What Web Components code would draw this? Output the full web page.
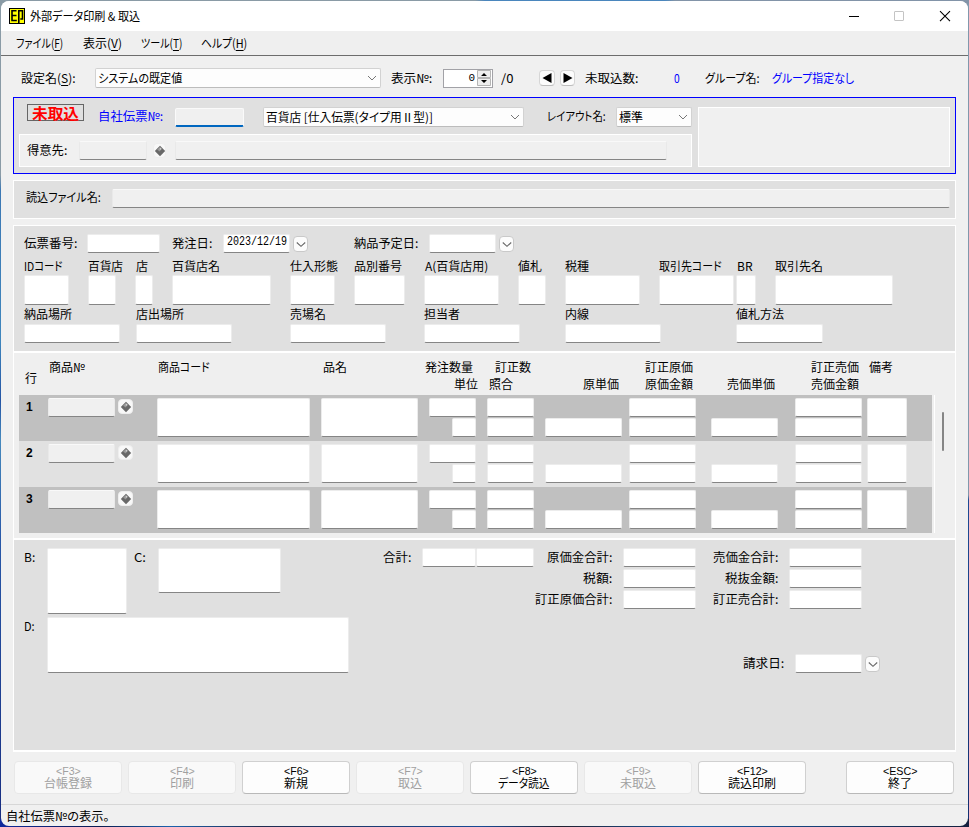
<!DOCTYPE html>
<html lang="ja">
<head>
<meta charset="utf-8">
<title>外部データ印刷 & 取込</title>
<style>
html,body{margin:0;padding:0}
body{width:969px;height:827px;overflow:hidden;font:12px/12px "Noto Sans CJK JP","Liberation Sans",sans-serif;color:#000;
background:linear-gradient(90deg,#8a9ba6 0 475px,#4a86bd 485px 665px,#8294a8 675px) 0 0/100% 4px no-repeat,
linear-gradient(90deg,#10299c,#0a1c50 100px,#1b62ad 170px,#202c50 260px,#184a95 480px,#202030 560px,#175aa5 690px,#15203e) 0 100%/100% 8px no-repeat,
linear-gradient(#8a9ba6 0 175px,#3c78b4 190px,#3f86bd 340px,#2454a4 400px,#4689bd 440px,#2858a8 540px,#172c80) 0 0/50% 100% no-repeat,
linear-gradient(#8198ac 0 495px,#1d4b94 500px,#132f70) 100% 0/50% 100% no-repeat}
</style>
</head>
<body>
<app-window>
  <title-bar><ui-label fit="110">外部データ印刷 &amp; 取込</ui-label></title-bar>
  <menu-bar>
    <form-row x0="1" h="24" cols="16:47 83:39 141:41 201:46">
      <ui-label fit="47">ファイル(<u>F</u>)</ui-label><ui-label fit="39">表示(<u>V</u>)</ui-label><ui-label fit="41">ツール(<u>T</u>)</ui-label><ui-label fit="46">ヘルプ(<u>H</u>)</ui-label>
    </form-row>
  </menu-bar>
  <form-row x0="1" h="38" style="padding-top:3px" cols="21:56 95:286 391:42 443:50 501:13 539:16 560:15 585:54 674:8 705:56 772:83">
    <ui-label fit="55">設定名(<u>S</u>):</ui-label><ui-combo><ui-label fit="84">システムの既定値</ui-label></ui-combo>
    <ui-label fit="41">表示№:</ui-label><ui-spin>0</ui-spin><ui-label fit="12">/0</ui-label>
    <icon-btn kind="prev"></icon-btn><icon-btn kind="next"></icon-btn>
    <ui-label fit="53">未取込数:</ui-label><ui-label class="b" fit="6">0</ui-label><ui-label fit="55">グループ名:</ui-label><ui-label class="b" fit="82">グループ指定なし</ui-label>
  </form-row>

  <ui-panel class="main" style="height:75px">
    <two-col>
      <div>
        <form-row x0="14" h="34" style="padding-top:2px" cols="27:57 98:66 175:69 263:261 547:60 616:76">
          <status-tag style="margin-bottom:9px"><ui-label fit="47">未取込</ui-label></status-tag>
          <ui-label class="b" fit="65" style="margin-bottom:3px">自社伝票№:</ui-label>
          <ui-input ro focus></ui-input>
          <ui-combo><ui-label fit="167">百貨店 [仕入伝票(タイプ用Ⅱ型)]</ui-label></ui-combo>
          <ui-label fit="59" style="margin-bottom:3px">レイアウト名:</ui-label>
          <ui-combo><ui-label fit="24">標準</ui-label></ui-combo>
        </form-row>
        <ui-panel class="sub" style="height:31px">
          <form-row x0="20" h="31" cols="27:41 79:68 153:13 175:492">
            <ui-label fit="40" class="r">得意先:</ui-label><ui-input ro></ui-input><icon-btn kind="gem"></icon-btn><ui-input ro></ui-input>
          </form-row>
        </ui-panel>
      </div>
      <ui-panel class="side"></ui-panel>
    </two-col>
  </ui-panel>

  <ui-panel style="height:37px;margin-top:6px">
    <form-row x0="14" h="33" cols="26:76 112:838">
      <ui-label fit="75" class="r">読込ファイル名:</ui-label><ui-input ro style="margin-top:1px"></ui-input>
    </form-row>
  </ui-panel>

  <ui-panel style="height:125px;margin-top:6px;border-bottom-width:2px">
    <form-row x0="14" style="padding-top:3px;height:29px" cols="24:54 87:73 172:41 223:67 293:15 354:65 429:67 499:15">
      <ui-label fit="53" class="r">伝票番号:</ui-label><ui-input></ui-input><ui-label fit="40" class="r">発注日:</ui-label><ui-input><ui-label class="date" fit="60">2023/12/19</ui-label></ui-input><icon-btn kind="down"></icon-btn>
      <ui-label fit="64" class="r">納品予定日:</ui-label><ui-input></ui-input><icon-btn kind="down"></icon-btn>
    </form-row>
    <form-row x0="14" h="16" cols="24:40 88:36 136:12 172:49 290:49 354:48 425:64 518:24 565:24 659:64 737:16 775:49">
      <ui-label fit="39">IDコード</ui-label><ui-label fit="35">百貨店</ui-label><ui-label fit="12">店</ui-label><ui-label fit="48">百貨店名</ui-label><ui-label fit="48">仕入形態</ui-label><ui-label fit="48">品別番号</ui-label><ui-label fit="63">A(百貨店用)</ui-label><ui-label fit="24">値札</ui-label><ui-label fit="24">税種</ui-label><ui-label fit="63">取引先コード</ui-label><ui-label fit="16">BR</ui-label><ui-label fit="48">取引先名</ui-label>
    </form-row>
    <form-row x0="14" h="31" cols="24:45 88:28 135:18 172:99 290:45 354:51 424:75 518:28 565:75 659:75 736:20 775:118">
      <ui-input h="30"></ui-input><ui-input h="30"></ui-input><ui-input h="30"></ui-input><ui-input h="30"></ui-input><ui-input h="30"></ui-input><ui-input h="30"></ui-input><ui-input h="30"></ui-input><ui-input h="30"></ui-input><ui-input h="30"></ui-input><ui-input h="30"></ui-input><ui-input h="30"></ui-input><ui-input h="30"></ui-input>
    </form-row>
    <form-row x0="14" h="18" cols="24:49 136:49 290:37 424:37 565:24 736:49">
      <ui-label fit="48">納品場所</ui-label><ui-label fit="48">店出場所</ui-label><ui-label fit="36">売場名</ui-label><ui-label fit="36">担当者</ui-label><ui-label fit="24">内線</ui-label><ui-label fit="48">値札方法</ui-label>
    </form-row>
    <form-row x0="14" h="20" cols="24:96 136:96 290:96 424:96 565:96 736:87">
      <ui-input></ui-input><ui-input></ui-input><ui-input></ui-input><ui-input></ui-input><ui-input></ui-input><ui-input></ui-input>
    </form-row>
  </ui-panel>

  <ui-panel class="light" style="height:185px;border-top:0;border-bottom-width:2px">
    <form-row x0="14" h="20" style="padding-top:4px" cols="49:37 158:53 323:25 425:48 495:36 645:49 811:49 869:24">
      <ui-label fit="36">商品№</ui-label><ui-label fit="52">商品コード</ui-label><ui-label fit="24">品名</ui-label><ui-label fit="48">発注数量</ui-label><ui-label fit="36">訂正数</ui-label><ui-label fit="48">訂正原価</ui-label><ui-label fit="48">訂正売価</ui-label><ui-label fit="24">備考</ui-label>
    </form-row>
    <form-row x0="14" h="14" style="padding-bottom:4px" cols="25:12 454:24 489:24 583:36 645:49 727:48 811:49">
      <ui-label fit="12" style="margin-bottom:13px">行</ui-label><ui-label fit="24">単位</ui-label><ui-label fit="24">照合</ui-label><ui-label fit="36">原単価</ui-label><ui-label fit="48">原価金額</ui-label><ui-label fit="48">売価単価</ui-label><ui-label fit="48">売価金額</ui-label>
    </form-row>
    <item-list><item-row>1</item-row><item-row>2</item-row><item-row>3</item-row></item-list>
  </ui-panel>

  <ui-panel style="height:210px;border-top:0;border-bottom-width:2px">
    <foot-grid>
      <div>
        <form-row x0="14" h="69" top style="padding-top:8px" cols="24:12 47:80 134:14 158:123">
          <ui-label fit="11" class="t">B:</ui-label><ui-input h="66"></ui-input><ui-label fit="12" class="t">C:</ui-label><ui-input h="45"></ui-input>
        </form-row>
        <form-row x0="14" h="56" top cols="24:12 47:302">
          <ui-label fit="11" class="t">D:</ui-label><ui-input h="56"></ui-input>
        </form-row>
      </div>
      <div>
        <form-row x0="374" h="21" style="padding-top:7px" cols="383:29 422:54 476:58 547:66 623:73 713:66 789:73">
          <ui-label fit="28" class="r">合計:</ui-label><ui-input></ui-input><ui-input></ui-input><ui-label fit="65" class="r">原価金合計:</ui-label><ui-input></ui-input><ui-label fit="65" class="r">売価金合計:</ui-label><ui-input></ui-input>
        </form-row>
        <form-row x0="374" h="21" cols="583:30 623:73 725:54 789:73">
          <ui-label fit="29" class="r">税額:</ui-label><ui-input></ui-input><ui-label fit="53" class="r">税抜金額:</ui-label><ui-input></ui-input>
        </form-row>
        <form-row x0="374" h="21" cols="535:78 623:73 713:66 789:73">
          <ui-label fit="77" class="r">訂正原価合計:</ui-label><ui-input></ui-input><ui-label fit="65" class="r">訂正売合計:</ui-label><ui-input></ui-input>
        </form-row>
        <form-row x0="374" h="21" style="padding-top:43px" cols="743:42 795:67 865:15">
          <ui-label fit="41" class="r">請求日:</ui-label><ui-input></ui-input><icon-btn kind="down"></icon-btn>
        </form-row>
      </div>
    </foot-grid>
  </ui-panel>

  <fn-bar>
    <fn-button off key="&lt;F3&gt;" kw="25"><ui-label fit="48">台帳登録</ui-label></fn-button>
    <fn-button off key="&lt;F4&gt;" kw="25"><ui-label fit="24">印刷</ui-label></fn-button>
    <fn-button key="&lt;F6&gt;" kw="25"><ui-label fit="24">新規</ui-label></fn-button>
    <fn-button off key="&lt;F7&gt;" kw="25"><ui-label fit="24">取込</ui-label></fn-button>
    <fn-button key="&lt;F8&gt;" kw="25"><ui-label fit="52">データ読込</ui-label></fn-button>
    <fn-button off key="&lt;F9&gt;" kw="25"><ui-label fit="36">未取込</ui-label></fn-button>
    <fn-button key="&lt;F12&gt;" kw="31"><ui-label fit="48">読込印刷</ui-label></fn-button>
    <fn-button key="&lt;ESC&gt;" kw="34" style="margin-left:34px"><ui-label fit="24">終了</ui-label></fn-button>
  </fn-bar>
  <status-bar><ui-label fit="104">自社伝票№の表示。</ui-label></status-bar>
</app-window>

<script>
const define = (name, html, setup) => {
  const tpl = document.createElement('template');
  tpl.innerHTML = html;
  customElements.define(name, class extends HTMLElement {
    connectedCallback() {
      if (this.shadowRoot) return;
      this.attachShadow({ mode: 'open' }).append(tpl.content.cloneNode(true));
      if (setup) setup(this, this.shadowRoot);
    }
  });
};

define('app-window', `<style>:host{display:flex;flex-direction:column;box-sizing:border-box;margin:1px;width:967px;height:825px;background:#f0f0f0;border-radius:8px;overflow:hidden}</style><slot></slot>`);

define('title-bar', `<style>:host{display:flex;height:30px;background:#fff;align-items:center;padding-left:8px;box-sizing:border-box}
svg{display:block;flex:none}.t{margin-left:5px;flex:1}.c{margin-right:16px}</style>
<svg width="16" height="16" viewBox="0 0 16 16"><path fill="#000" d="M0 0h16v16H0z"/><path fill="#ff0" d="M1 1h14v14H1z"/><path fill="none" stroke="#000" stroke-width="1.600" d="M7.500 2.800H3v9.700h4.800M3 7.500h4.500M9.800 15V2.800h3.700v8.200h-2.200"/></svg>
<div class="t"><slot></slot></div>
<svg class="c" width="104" height="16" viewBox="0 0 104 16" fill="none"><path stroke="#000" d="M1 8.500h10"/><rect x="46.500" y="3.500" width="9" height="9" rx=".5" stroke="#c4c4c4"/><path stroke="#000" stroke-width="1.100" d="M92 3.200l10 10M102 3.200l-10 10"/></svg>`);

define('menu-bar', `<style>:host{display:block;height:24px;border-bottom:1px solid #6d6d6d;background:#efefef}</style><slot></slot>`);

// Grid row whose columns are given as "left:width" pairs, measured from x0.
define('form-row', `<style>:host{display:grid;align-items:center}</style><slot></slot>`, el => {
  let x = +el.getAttribute('x0');
  const tracks = [];
  el.getAttribute('cols').split(' ').forEach((c, i) => {
    const [left, w] = c.split(':').map(Number);
    tracks.push(left - x + 'px', w + 'px');
    x = left + w;
    el.children[i].style.gridColumn = 2 * i + 2;
    el.children[i].style.gridRow = 1;
  });
  const height = el.style.height || el.getAttribute('h') + 'px';
  el.style.gridTemplateColumns = tracks.join(' ');
  el.style.gridTemplateRows = height;
  el.style.height = height;
  if (el.hasAttribute('top')) el.style.alignItems = 'start';
});

define('status-tag', `<style>:host{display:flex;box-sizing:border-box;height:17px;border:1px solid #666;align-items:center;justify-content:center;color:#f00;font-weight:700;font-size:15px}</style><slot></slot>`);
define('fn-bar', `<style>:host{display:flex;gap:6px;padding:9px 0 10px 13px}</style><slot></slot>`);

// Label condensed or widened to the width in "fit".
define('ui-label', `<style>:host{display:block;height:14px;line-height:14px;white-space:nowrap;min-width:0}
:host(.b){color:#00f}:host(.t){margin-top:2px}:host(.r){margin-bottom:2px}:host(.date){font-family:"Liberation Mono",monospace}
span{display:inline-block;transform-origin:0 50%;font-feature-settings:"palt"}::slotted(u){text-underline-offset:2px}</style><span><slot></slot></span>`, (el, root) => {
  const fit = +el.getAttribute('fit'), span = root.querySelector('span');
  if (!fit) return;
  el.style.width = fit + 'px';
  span.style.transform = `scaleX(${fit / span.offsetWidth})`;
});

define('ui-input', `<style>:host{display:block;box-sizing:border-box;background:#fff;border:1px solid #ececec;border-bottom-color:#858585;border-radius:2px;padding:0 3px;min-width:0}
:host([ro]){background:#f0f0f0;border-color:#f9f9f9 #e9e9e9 #858585}:host([focus]){border-color:#fafafa;border-bottom:2px solid #0067c0}</style><slot></slot>`,
  el => { el.style.height = (el.getAttribute('h') || 19) + 'px'; });

define('ui-combo', `<style>:host{display:flex;box-sizing:border-box;height:20px;align-items:center;justify-content:space-between;background:#fdfdfd;border:1px solid #d2d2d2;border-bottom-color:#bcbcbc;border-radius:2px;padding:0 3px 0 2px}</style><slot></slot>
<svg width="10" height="6" viewBox="0 0 10 6"><path d="M1 1l4 4 4-4" fill="none" stroke="#777"/></svg>`);

define('ui-spin', `<style>:host{display:flex;box-sizing:border-box;height:19px;background:#fff;border:1px solid #a2a2a7;justify-content:flex-end;align-items:center}
span{font:11px/15px "Liberation Mono",monospace;margin-right:2px}svg{display:block;margin-right:1px}</style><span><slot></slot></span>
<svg width="14" height="16" viewBox="0 0 14 16"><path fill="#eee" stroke="#b5b5b5" d="M.5.5h13v7H.5zM.5 8.500h13v7H.5z"/><path d="M4 6l3-3 3 3zM4 10h6l-3 3z"/></svg>`);

define('icon-btn', `<style>:host{display:flex;box-sizing:border-box;height:16px;align-items:center;justify-content:center;background:#fcfcfc;border:1px solid #d6d6d6;border-bottom-color:#bdbdbd;border-radius:4px}
:host([kind=gem]){background:#f8f8f8;border-color:#eee;height:15px}:host([kind=down]){border-color:#c9c9c9}svg{display:block;flex:none}</style>`, (el, root) => {
  const art = {
    prev: '<path d="M10.500 1v10L1.500 6z"/>',
    next: '<path d="M1.500 1v10l9-5z"/>',
    down: '<path d="M1.800 4.500L6 8.300l4.200-3.800" fill="none" stroke="#666" stroke-width="1.100"/>',
    gem: '<path d="M6 .8L11.200 6 6 11.200.8 6z" fill="#686868"/><path d="M6 1.800l2 2-2.500 2.700-2.300-2z" fill="#999"/><path d="M5.800 3.200h1.300v1.300H5.800z" fill="#ddd"/>'
  };
  root.innerHTML += `<svg width="12" height="12" viewBox="0 0 12 12">${art[el.getAttribute('kind')]}</svg>`;
});

define('ui-panel', `<style>:host{display:block;margin:0 12px;border:1px solid #fff;background:#e0e0e0;flex:none}
:host(.main){border-color:#00f}:host(.sub){margin:0 0 0 5px;background:#f0f0f0}:host(.side){margin:9px 5px 6px 6px;background:#f0f0f0}:host(.light){background:#efefef}</style><slot></slot>`);

define('two-col', `<style>:host{display:grid;grid-template-columns:678px 1fr;height:75px}</style><slot></slot>`);
define('foot-grid', `<style>:host{display:grid;grid-template-columns:360px 1fr}</style><slot></slot>`);

define('item-list', `<style>:host{display:grid;grid-template-columns:913px 1px 1fr;column-gap:2px;margin-left:5px;height:138px}i{background:#fff}b{width:2px;height:39px;margin:17px 0 0 5px;border-radius:1px;background:#858585}</style><div><slot></slot></div><i></i><b></b>`);

define('item-row', `<style>:host{display:grid;box-sizing:border-box;height:46px;padding:3px 0 0 7px;grid-template-rows:19px 19px;row-gap:1px;background:#c0c0c0;
grid-template-columns:22px 67px 3px 15px 24px 153px 11px 97px 11px 47px 11px 47px 11px 77px 7px 67px 15px 67px 17px 67px 5px 40px}
:host(:nth-child(even)){background:#e1e1e1}.n{font-weight:700;line-height:18px;font-size:12px;font-family:"Liberation Sans",sans-serif}
.u{width:24px;justify-self:end}icon-btn{margin-top:1px}</style>
<span class="n"><slot></slot></span>
<ui-input ro style="grid-area:1/2"></ui-input><icon-btn kind="gem" style="grid-area:1/4"></icon-btn>
<ui-input h="39" style="grid-area:1/6/3"></ui-input><ui-input h="39" style="grid-area:1/8/3"></ui-input>
<ui-input style="grid-area:1/10"></ui-input><ui-input class="u" style="grid-area:2/10"></ui-input>
<ui-input style="grid-area:1/12"></ui-input><ui-input style="grid-area:2/12"></ui-input>
<ui-input style="grid-area:2/14"></ui-input>
<ui-input style="grid-area:1/16"></ui-input><ui-input style="grid-area:2/16"></ui-input>
<ui-input style="grid-area:2/18"></ui-input>
<ui-input style="grid-area:1/20"></ui-input><ui-input style="grid-area:2/20"></ui-input>
<ui-input h="39" style="grid-area:1/22/3"></ui-input>`);

define('fn-button', `<style>:host{display:flex;flex-direction:column;align-items:center;box-sizing:border-box;width:108px;height:33px;padding-top:2px;background:#fdfdfd;border:1px solid #d0d0d0;border-bottom-color:#b9b9b9;border-radius:4px}
:host([off]){color:#a0a0a0;background:#f9f9f9;border-color:#e8e8e8}ui-label{height:12px;font-family:"Liberation Sans",sans-serif;font-size:11px}</style><ui-label></ui-label><slot></slot>`, (el, root) => {
  const k = document.createElement('ui-label');
  k.setAttribute('fit', el.getAttribute('kw'));
  k.textContent = el.getAttribute('key');
  root.querySelector('ui-label').replaceWith(k);
});
define('status-bar', `<style>:host{display:flex;align-items:center;flex:1;border-top:1px solid #d7d7d7;padding-left:5px}</style><slot></slot>`);
</script>
</body>
</html>
